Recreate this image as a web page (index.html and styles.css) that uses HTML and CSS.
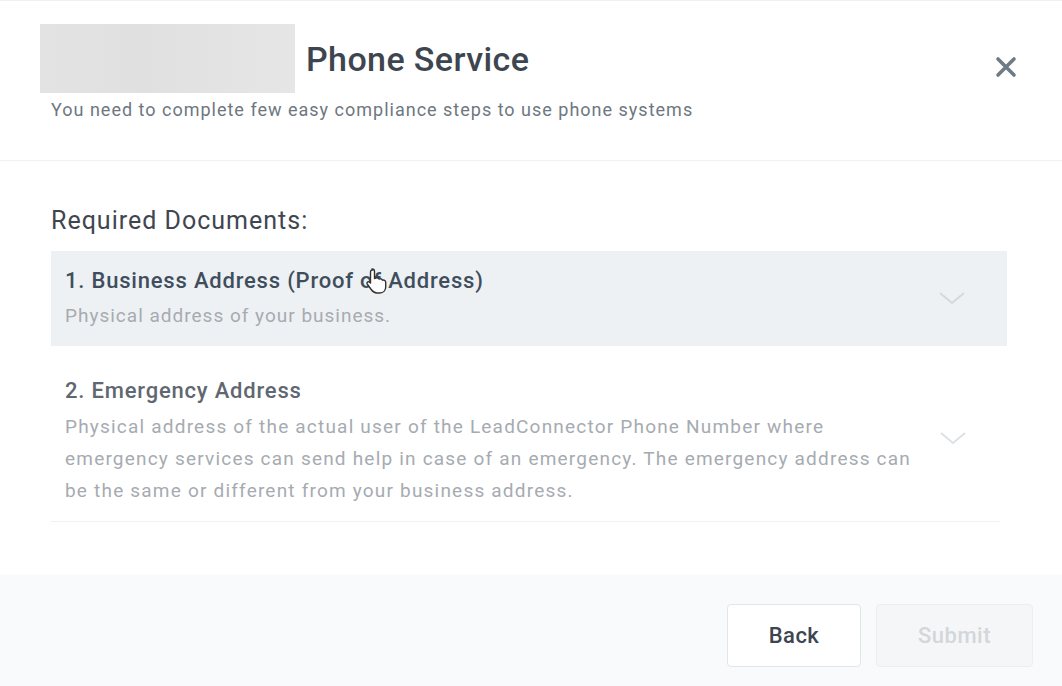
FILE: index.html
```html
<!DOCTYPE html>
<html>
	<head>
		<meta http-equiv="Content-Type" content="text/html; charset=utf-8">
		<title>Phone Service</title>
		<link rel="stylesheet" href="styles.css">
	</head>
	<body>
		<div class="modal">
			<header class="modal-header">
				<div class="title-row">
					<div class="redacted"></div>
					<h1 class="title">Phone Service</h1>
					<button class="close" title="Close">
						<svg width="24" height="24" viewBox="0 0 24 24">
							<path d="M4 4 L20 20 M20 4 L4 20" stroke="#6f7c86" stroke-width="3.6" stroke-linecap="round"/>
						</svg>
					</button>
				</div>
				<p class="subtitle">You need to complete few easy compliance steps to use phone systems</p>
			</header>

			<section class="modal-body">
				<h2 class="section-title">Required Documents:</h2>

				<div class="doc doc-active">
					<div class="doc-text">
						<div class="doc-title">1. Business Address (Proof of Address)</div>
						<div class="doc-desc">Physical address of your business.</div>
					</div>
					<svg class="chevron" width="28" height="16" viewBox="0 0 28 16">
						<path d="M2 3 L14 13 L26 3" fill="none" stroke="#d3d8dc" stroke-width="2"/>
					</svg>
					<svg class="cursor" width="26" height="28" viewBox="0 0 26 28">
						<path d="M7 2 c1.5 0 2.5 1 2.5 2.5 v7 l1-0.5 c1.5-0.5 3 0 3.5 1 c1.5-0.5 3 0 3.5 1.2 c1.5-0.5 3 0.3 3.2 1.8 v5 c0 3-2 6-6 6 h-3 c-2.5 0-4-1.5-5.5-3.5 l-4-5.5 c-0.8-1.2 0.5-2.8 2-2 l1.3 1 v-10.5 c0-1.5 0.8-2.5 2-2.5 z" fill="#fff" stroke="#333" stroke-width="1.4" stroke-linejoin="round"/>
					</svg>
				</div>

				<div class="doc">
					<div class="doc-text">
						<div class="doc-title">2. Emergency Address</div>
						<div class="doc-desc">Physical address of the actual user of the LeadConnector Phone Number where emergency services can send help in case of an emergency. The emergency address can be the same or different from your business address.</div>
					</div>
					<svg class="chevron" width="28" height="16" viewBox="0 0 28 16">
						<path d="M2 3 L14 13 L26 3" fill="none" stroke="#dde1e4" stroke-width="2"/>
					</svg>
				</div>
			</section>

			<footer class="modal-footer">
				<button class="btn btn-back">Back</button>
				<button class="btn btn-submit" disabled>Submit</button>
			</footer>
		</div>
	</body>
</html>
```

FILE: styles.css
```css
body{
	margin: 0;
	padding: 0;
	font-family: Roboto, "Liberation Sans", sans-serif;
	background: #fff;
	overflow: hidden;
}

.modal{
	height: 686px;
	display: flex;
	flex-direction: column;
	border-top: 1px solid #eef0f3;
	box-sizing: border-box;
}

.modal-header{
	height: 160px;
	box-sizing: border-box;
	padding: 23px 44px 0 40px;
	border-bottom: 1px solid #eff1f3;
}

.title-row{
	display: flex;
	align-items: center;
}

.redacted{
	width: 255px;
	height: 69px;
	background: linear-gradient(90deg, #e3e3e3, #e0e0e0 40%, #e6e6e6);
}

.title{
	margin: 0 0 0 11px;
	font-size: 34px;
	letter-spacing: 0.4px;
	font-weight: 500;
	color: #3d4650;
	flex: 1;
}

.close{
	align-self: flex-start;
	margin-top: 31px;
	background: none;
	border: 0;
	padding: 0;
	width: 24px;
	height: 24px;
}

.subtitle{
	margin: 6px 0 0 11px;
	font-size: 18px;
	letter-spacing: 1px;
	line-height: 22px;
	color: #6e7780;
}

.modal-body{
	flex: 1;
	padding: 0 55px 0 51px;
}

.section-title{
	margin: 45px 0 15px;
	font-size: 25px;
	letter-spacing: 1px;
	line-height: 30px;
	font-weight: 400;
	color: #3f4650;
}

.doc{
	position: relative;
	display: flex;
	align-items: center;
	padding: 32px 33px 14px 14px;
	border-bottom: 1px solid #f0f1f3;
	margin-right: 7px;
}

.doc-active{
	background: #eef1f3;
	padding: 17px 41px 18px 14px;
	border-bottom: 0;
	margin-right: 0;
}

.doc-text{
	flex: 1;
	max-width: 852px;
}

.doc-title{
	font-size: 22px;
	letter-spacing: 0.8px;
	line-height: 26px;
	font-weight: 500;
	color: #5f6771;
}

.doc-active .doc-title{
	color: #3f4e5d;
}

.doc-desc{
	margin-top: 7px;
	font-size: 19px;
	letter-spacing: 1.2px;
	line-height: 32px;
	color: #a6abb1;
}

.doc-active .doc-desc{
	margin-top: 10px;
	letter-spacing: 1px;
	line-height: 24px;
}

.chevron{
	margin-left: auto;
	margin-bottom: 9px;
}

.doc-active .chevron{
	margin-bottom: 0;
}

.cursor{
	position: absolute;
	left: 314px;
	top: 16px;
}

.modal-footer{
	height: 111px;
	box-sizing: border-box;
	background: #f9fafb;
	display: flex;
	justify-content: flex-end;
	gap: 15px;
	padding: 29px 29px 0 0;
}

.btn{
	height: 63px;
	border-radius: 4px;
	font-family: Roboto, "Liberation Sans", sans-serif;
	font-size: 22px;
	letter-spacing: 0.5px;
	font-weight: 500;
}

.btn-back{
	width: 134px;
	background: #fff;
	border: 1px solid #e3e6e9;
	color: #3d4650;
}

.btn-submit{
	width: 157px;
	background: #f5f6f7;
	border: 1px solid #eceef0;
	color: #d3d6da;
}
```
